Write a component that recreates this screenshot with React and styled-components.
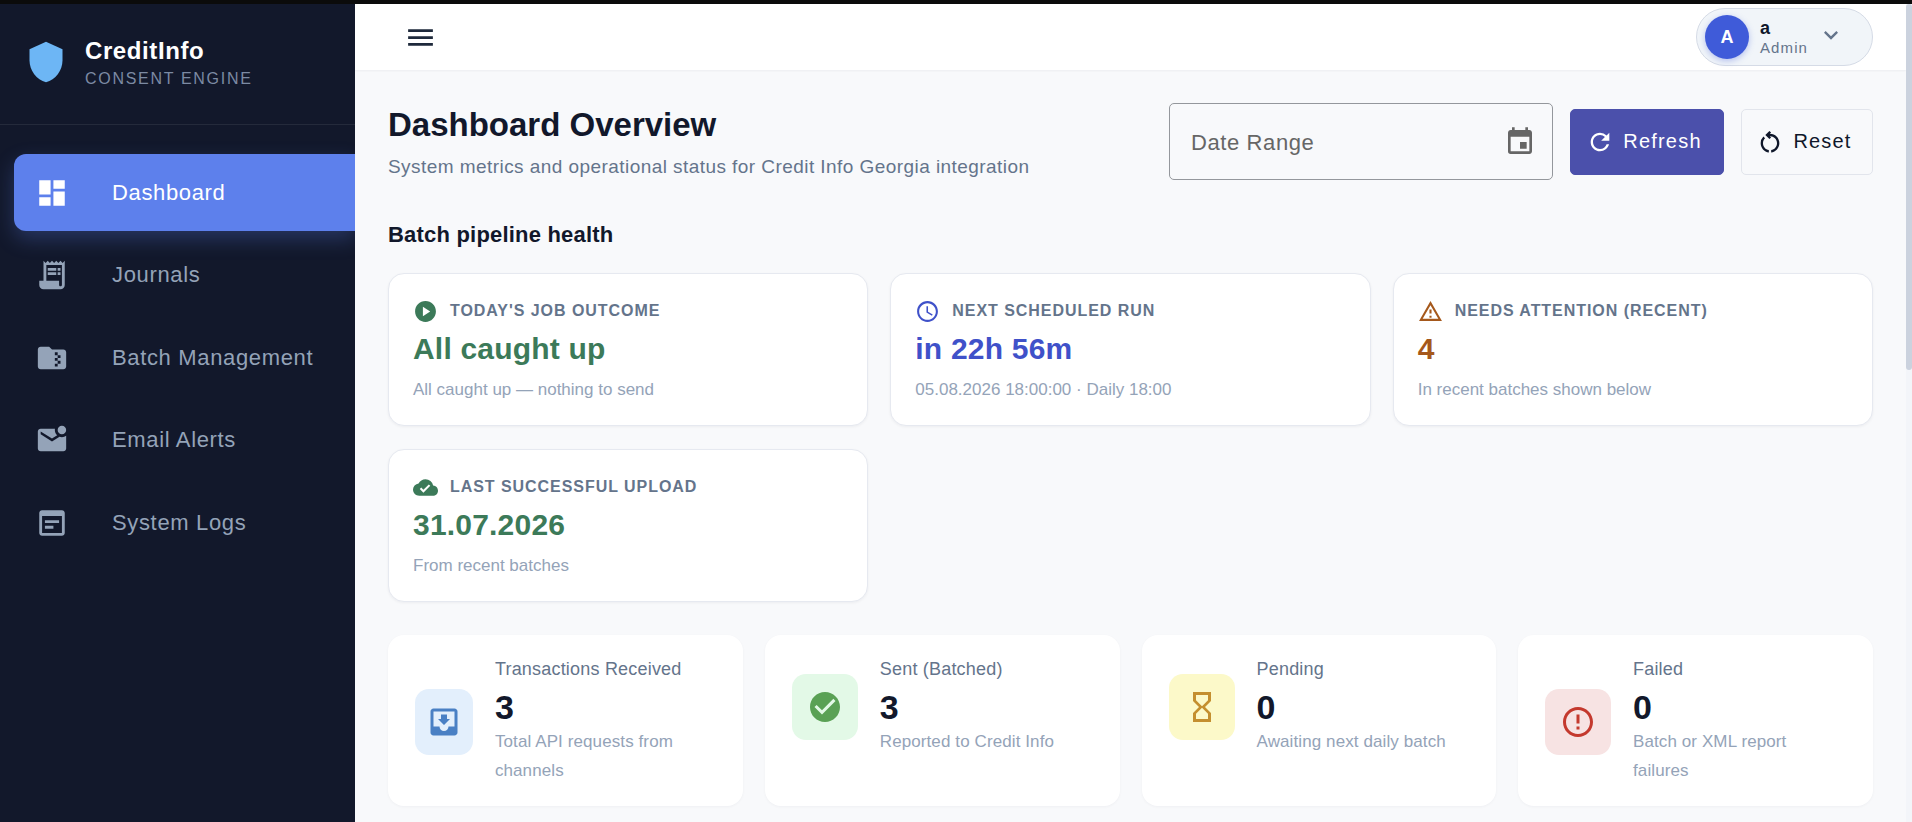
import React from "react";
import styled, { createGlobalStyle } from "styled-components";
import {
  MdDashboard,
  MdReceiptLong,
  MdFolderZip,
  MdMarkEmailUnread,
  MdOutlineMenu,
  MdKeyboardArrowDown,
  MdRefresh,
  MdPlayCircle,
  MdOutlineSchedule,
  MdOutlineWarningAmber,
  MdCloudDone,
  MdMoveToInbox,
  MdCheckCircle,
  MdHourglassEmpty,
  MdErrorOutline,
  MdEvent,
  MdOutlineRestartAlt,
  MdShield,
} from "react-icons/md";

const GlobalStyle = createGlobalStyle`
  html, body {
    margin: 0;
    padding: 0;
    height: 100%;
    overflow: hidden;
    background: #0b0b0b;
    font-family: "Liberation Sans", Arial, sans-serif;
  }
  * { box-sizing: border-box; }
`;

const Shell = styled.div`
  display: flex;
  height: 822px;
  padding-top: 4px;
  background: #0b0b0b;
`;

const Sidebar = styled.aside`
  width: 355px;
  flex-shrink: 0;
  background: #12182b;
  color: #94a3b8;
`;

const Brand = styled.div`
  height: 121px;
  display: flex;
  align-items: center;
  gap: 17px;
  padding: 0 0 4px 24px;
  border-bottom: 1px solid rgba(255, 255, 255, 0.08);

  svg {
    font-size: 44px;
    color: #6db6f5;
  }
`;

const BrandText = styled.div`
  display: flex;
  flex-direction: column;
  gap: 5px;
`;

const BrandName = styled.div`
  font-size: 24px;
  font-weight: 700;
  color: #fff;
  letter-spacing: 0.6px;
`;

const BrandSub = styled.div`
  font-size: 16px;
  color: #7c8aa3;
  letter-spacing: 1.7px;
`;

const Nav = styled.nav`
  display: flex;
  flex-direction: column;
  gap: 5.5px;
  padding: 29px 0 0 14px;
`;

const NavItem = styled.div`
  height: 77px;
  display: flex;
  align-items: center;
  padding-left: 21px;
  font-size: 22px;
  letter-spacing: 0.65px;
  border-radius: 12px 0 0 12px;
  color: ${({ $active }) => ($active ? "#fff" : "#94a3b8")};
  background: ${({ $active }) => ($active ? "#5d80ec" : "transparent")};
  box-shadow: ${({ $active }) =>
    $active ? "0 8px 20px rgba(93, 128, 236, 0.28)" : "none"};

  svg {
    font-size: 34px;
    flex-shrink: 0;
    margin-right: 43px;
    color: ${({ $active }) => ($active ? "#fff" : "#94a3b8")};
  }
`;

const Column = styled.div`
  flex: 1;
  min-width: 0;
  overflow: hidden;
  background: #f8f9fb;
`;

const ScrollRail = styled.div`
  width: 6px;
  flex-shrink: 0;
  background: #f3f5f9;
`;

const ScrollThumb = styled.div`
  height: 366px;
  border-radius: 3px;
  background: #cbd2de;
`;

const Topbar = styled.header`
  height: 66px;
  display: flex;
  align-items: center;
  justify-content: space-between;
  padding: 0 33px 0 49px;
  background: #fff;
  box-shadow: 0 1px 2px rgba(15, 23, 42, 0.05);

  > svg {
    font-size: 33px;
    color: #1e293b;
  }
`;

const UserChip = styled.div`
  width: 177px;
  height: 58px;
  display: flex;
  align-items: center;
  padding-left: 8px;
  border: 1px solid #d5dbe6;
  border-radius: 29px;
  background: #f1f5f9;

  > svg {
    font-size: 28px;
    color: #64748b;
    margin-left: 9px;
    margin-top: -4px;
  }
`;

const Avatar = styled.div`
  width: 44px;
  height: 44px;
  flex-shrink: 0;
  border-radius: 50%;
  display: flex;
  align-items: center;
  justify-content: center;
  background: #3f5bd9;
  color: #fff;
  font-size: 18px;
  font-weight: 700;
  box-shadow: 0 2px 6px rgba(63, 91, 217, 0.35);
`;

const UserInfo = styled.div`
  margin-left: 11px;
  display: flex;
  flex-direction: column;
  gap: 2px;
`;

const UserName = styled.div`
  font-size: 18px;
  font-weight: 700;
  line-height: 18px;
  color: #0f172a;
`;

const UserRole = styled.div`
  font-size: 15px;
  line-height: 17px;
  letter-spacing: 1.1px;
  color: #64748b;
`;

const Content = styled.main`
  padding: 33px 33px 0;
`;

const PageHead = styled.div`
  display: flex;
  justify-content: space-between;
  align-items: flex-start;
`;

const PageTitle = styled.h1`
  margin: 3px 0 0;
  font-size: 33px;
  line-height: 38px;
  font-weight: 700;
  color: #12182b;
`;

const PageSub = styled.p`
  margin: 12px 0 0;
  font-size: 19px;
  line-height: 22px;
  letter-spacing: 0.44px;
  color: #64748b;
`;

const Controls = styled.div`
  display: flex;
  align-items: center;
  gap: 17px;
`;

const DateField = styled.div`
  width: 384px;
  height: 77px;
  display: flex;
  align-items: center;
  justify-content: space-between;
  padding: 2px 16px 0 21px;
  border: 1px solid #94979c;
  border-radius: 5px;
  font-size: 22px;
  letter-spacing: 0.6px;
  color: #666;

  svg {
    font-size: 32px;
    color: #666;
    margin-top: -2px;
  }
`;

const ActionButton = styled.div`
  height: 66px;
  display: flex;
  align-items: center;
  justify-content: center;
  gap: 9px;
  padding-right: 6px;
  width: ${({ $width }) => $width}px;
  border-radius: 5px;
  font-size: 20px;
  letter-spacing: 1.2px;
  color: ${({ $primary }) => ($primary ? "#fff" : "#0f172a")};
  background: ${({ $primary }) => ($primary ? "#4b50ab" : "transparent")};
  border: 1px solid ${({ $primary }) => ($primary ? "#4b50ab" : "#e2e5ec")};

  svg {
    font-size: 28px;
  }
`;

const SectionTitle = styled.h2`
  margin: 43px 0 0;
  font-size: 22px;
  line-height: 24px;
  font-weight: 700;
  letter-spacing: 0.2px;
  color: #12182b;
`;

const HealthGrid = styled.div`
  display: grid;
  grid-template-columns: repeat(3, 1fr);
  column-gap: 22px;
  row-gap: 23px;
  margin-top: 26px;
`;

const HealthCard = styled.div`
  height: 153px;
  padding: 25px 24px;
  background: #fff;
  border: 1px solid #e6e9f0;
  border-radius: 16px;
  box-shadow: 0 1px 3px rgba(15, 23, 42, 0.05);
`;

const HealthLabel = styled.div`
  display: flex;
  align-items: center;
  gap: 12px;
  height: 24px;
  font-size: 16px;
  font-weight: 700;
  letter-spacing: 0.95px;
  color: #64748b;

  svg {
    font-size: 25px;
    flex-shrink: 0;
    color: ${({ $tone }) => $tone};
  }
`;

const HealthValue = styled.div`
  margin-top: 8px;
  font-size: 30px;
  line-height: 36px;
  font-weight: 700;
  letter-spacing: 0.2px;
  color: ${({ $tone }) => $tone};
`;

const HealthNote = styled.div`
  margin-top: 13px;
  font-size: 17px;
  line-height: 20px;
  color: #94a3b8;
`;

const KpiGrid = styled.div`
  display: grid;
  grid-template-columns: repeat(4, 1fr);
  gap: 22px;
  margin-top: 33px;
`;

const KpiCard = styled.div`
  height: 171px;
  padding: 23px 27px 21px;
  background: #fff;
  border-radius: 16px;
  box-shadow: 0 1px 3px rgba(15, 23, 42, 0.04);
`;

const KpiRow = styled.div`
  display: flex;
  align-items: center;
  gap: 22px;
`;

const KpiIcon = styled.div`
  width: 66px;
  height: 66px;
  display: flex;
  align-items: center;
  justify-content: center;
  border-radius: 14px;
  background: ${({ $bg }) => $bg};
  color: ${({ $fg }) => $fg};

  svg {
    font-size: 36px;
  }
`;

const KpiLabel = styled.div`
  font-size: 18px;
  line-height: 22px;
  letter-spacing: 0.2px;
  color: #64748b;
`;

const KpiValue = styled.div`
  margin-top: 7px;
  font-size: 34px;
  line-height: 40px;
  font-weight: 700;
  color: #12182b;
`;

const KpiNote = styled.div`
  font-size: 17px;
  line-height: 29px;
  letter-spacing: 0.1px;
  color: #94a3b8;
`;

const LogsIcon = () => (
  <svg viewBox="0 0 24 24" width="1em" height="1em" fill="currentColor">
    <path d="M19 3H5c-1.1 0-2 .9-2 2v14c0 1.1.9 2 2 2h14c1.1 0 2-.9 2-2V5c0-1.1-.9-2-2-2zm0 16H5V7h14v12z" />
    <path d="M7 10h10v2H7zM7 14h6v2H7z" />
  </svg>
);

const navItems = [
  { label: "Dashboard", icon: <MdDashboard />, active: true },
  { label: "Journals", icon: <MdReceiptLong /> },
  { label: "Batch Management", icon: <MdFolderZip /> },
  { label: "Email Alerts", icon: <MdMarkEmailUnread /> },
  { label: "System Logs", icon: <LogsIcon /> },
];

const healthCards = [
  {
    label: "TODAY'S JOB OUTCOME",
    icon: <MdPlayCircle />,
    value: "All caught up",
    note: "All caught up — nothing to send",
    tone: "#3c7a59",
  },
  {
    label: "NEXT SCHEDULED RUN",
    icon: <MdOutlineSchedule />,
    value: "in 22h 56m",
    note: "05.08.2026 18:00:00 · Daily 18:00",
    tone: "#3f51c9",
  },
  {
    label: "NEEDS ATTENTION (RECENT)",
    icon: <MdOutlineWarningAmber />,
    value: "4",
    note: "In recent batches shown below",
    tone: "#a5581b",
  },
  {
    label: "LAST SUCCESSFUL UPLOAD",
    icon: <MdCloudDone />,
    value: "31.07.2026",
    note: "From recent batches",
    tone: "#3c7a59",
  },
];

const kpis = [
  {
    label: "Transactions Received",
    value: "3",
    note: "Total API requests from channels",
    icon: <MdMoveToInbox />,
    bg: "#e3effc",
    fg: "#4a80c4",
  },
  {
    label: "Sent (Batched)",
    value: "3",
    note: "Reported to Credit Info",
    icon: <MdCheckCircle />,
    bg: "#e3f9e7",
    fg: "#5aa155",
  },
  {
    label: "Pending",
    value: "0",
    note: "Awaiting next daily batch",
    icon: <MdHourglassEmpty />,
    bg: "#fcf9c9",
    fg: "#c48f2f",
  },
  {
    label: "Failed",
    value: "0",
    note: "Batch or XML report failures",
    icon: <MdErrorOutline />,
    bg: "#f7e3e3",
    fg: "#c4392e",
  },
];

export default function App() {
  return (
    <>
      <GlobalStyle />
      <Shell>
        <Sidebar>
          <Brand>
            <MdShield />
            <BrandText>
              <BrandName>CreditInfo</BrandName>
              <BrandSub>CONSENT ENGINE</BrandSub>
            </BrandText>
          </Brand>
          <Nav>
            {navItems.map((item) => (
              <NavItem key={item.label} $active={item.active}>
                {item.icon}
                {item.label}
              </NavItem>
            ))}
          </Nav>
        </Sidebar>
        <Column>
          <Topbar>
            <MdOutlineMenu />
            <UserChip>
              <Avatar>A</Avatar>
              <UserInfo>
                <UserName>a</UserName>
                <UserRole>Admin</UserRole>
              </UserInfo>
              <MdKeyboardArrowDown />
            </UserChip>
          </Topbar>
          <Content>
            <PageHead>
              <div>
                <PageTitle>Dashboard Overview</PageTitle>
                <PageSub>
                  System metrics and operational status for Credit Info Georgia
                  integration
                </PageSub>
              </div>
              <Controls>
                <DateField>
                  Date Range
                  <MdEvent />
                </DateField>
                <ActionButton $primary $width={154}>
                  <MdRefresh />
                  Refresh
                </ActionButton>
                <ActionButton $width={132}>
                  <MdOutlineRestartAlt />
                  Reset
                </ActionButton>
              </Controls>
            </PageHead>
            <SectionTitle>Batch pipeline health</SectionTitle>
            <HealthGrid>
              {healthCards.map((card) => (
                <HealthCard key={card.label}>
                  <HealthLabel $tone={card.tone}>
                    {card.icon}
                    {card.label}
                  </HealthLabel>
                  <HealthValue $tone={card.tone}>{card.value}</HealthValue>
                  <HealthNote>{card.note}</HealthNote>
                </HealthCard>
              ))}
            </HealthGrid>
            <KpiGrid>
              {kpis.map((kpi) => (
                <KpiCard key={kpi.label}>
                  <KpiRow>
                    <KpiIcon $bg={kpi.bg} $fg={kpi.fg}>
                      {kpi.icon}
                    </KpiIcon>
                    <div>
                      <KpiLabel>{kpi.label}</KpiLabel>
                      <KpiValue>{kpi.value}</KpiValue>
                      <KpiNote>{kpi.note}</KpiNote>
                    </div>
                  </KpiRow>
                </KpiCard>
              ))}
            </KpiGrid>
          </Content>
        </Column>
        <ScrollRail>
          <ScrollThumb />
        </ScrollRail>
      </Shell>
    </>
  );
}
